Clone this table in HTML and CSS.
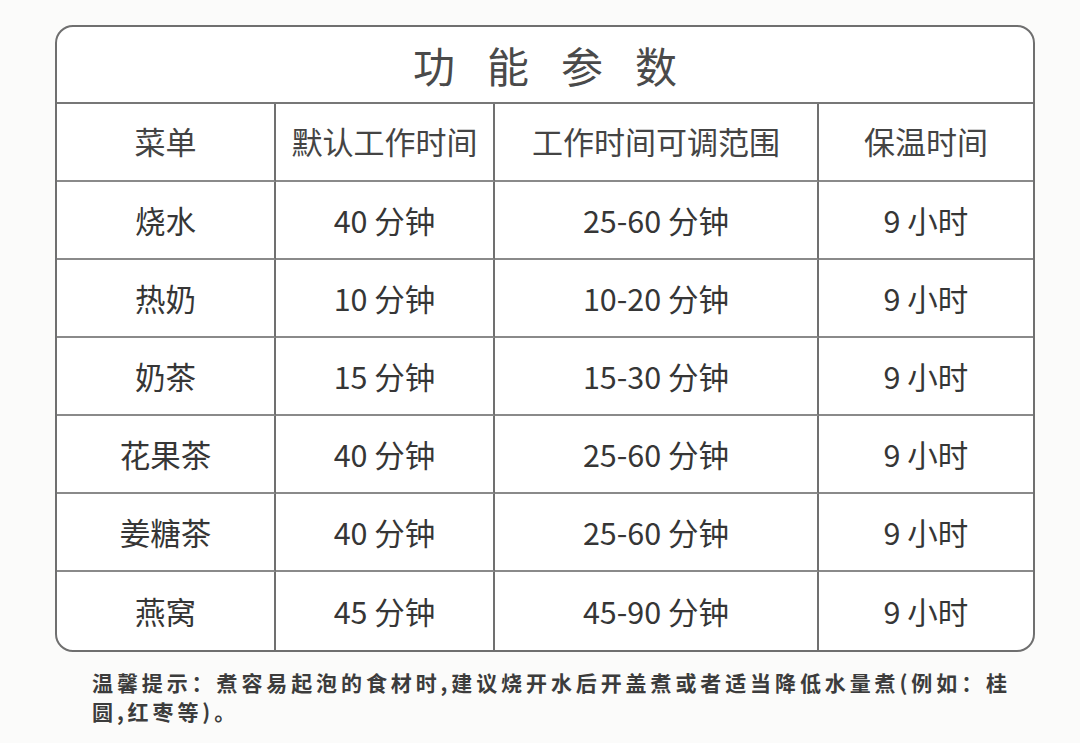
FILE: index.html
```html
<!DOCTYPE html>
<html lang="zh">
<head>
<meta charset="utf-8">
<title>功能参数</title>
<link rel="stylesheet" href="styles.css">
</head>
<body>
<div class="page">
  <div class="card">
    <div class="title">功能参数</div>
    <div class="grid">
      <div class="cell head">菜单</div>
      <div class="cell head">默认工作时间</div>
      <div class="cell head">工作时间可调范围</div>
      <div class="cell head last">保温时间</div>

      <div class="cell">烧水</div>
      <div class="cell">40 分钟</div>
      <div class="cell">25-60 分钟</div>
      <div class="cell last">9 小时</div>

      <div class="cell">热奶</div>
      <div class="cell">10 分钟</div>
      <div class="cell">10-20 分钟</div>
      <div class="cell last">9 小时</div>

      <div class="cell">奶茶</div>
      <div class="cell">15 分钟</div>
      <div class="cell">15-30 分钟</div>
      <div class="cell last">9 小时</div>

      <div class="cell">花果茶</div>
      <div class="cell">40 分钟</div>
      <div class="cell">25-60 分钟</div>
      <div class="cell last">9 小时</div>

      <div class="cell">姜糖茶</div>
      <div class="cell">40 分钟</div>
      <div class="cell">25-60 分钟</div>
      <div class="cell last">9 小时</div>

      <div class="cell bottom">燕窝</div>
      <div class="cell bottom">45 分钟</div>
      <div class="cell bottom">45-90 分钟</div>
      <div class="cell bottom last">9 小时</div>
    </div>
  </div>
  <p class="note">温馨提示：煮容易起泡的食材时,建议烧开水后开盖煮或者适当降低水量煮(例如：桂圆,红枣等)。</p>
</div>
</body>
</html>
```

FILE: styles.css
```css
html, body {
  margin: 0;
  padding: 0;
  background: #fbfbfa;
}

body {
  font-family: "Noto Sans CJK SC", "Noto Sans", sans-serif;
  color: #3a3a3a;
}

.page {
  width: 1080px;
  height: 743px;
  padding: 25px 0 0 55px;
  box-sizing: border-box;
}

.card {
  width: 980px;
  border: 2px solid #6f6f6f;
  border-radius: 18px;
  background: #ffffff;
  box-sizing: border-box;
  overflow: hidden;
}

.title {
  height: 77px;
  display: flex;
  align-items: center;
  justify-content: center;
  font-size: 42px;
  letter-spacing: 32px;
  padding-left: 32px;
  color: #4a4a4a;
  border-bottom: 2px solid #777777;
  box-sizing: border-box;
}

.grid {
  display: grid;
  grid-template-columns: 219px 219px 324px 1fr;
  grid-auto-rows: 78px;
}

.cell {
  display: flex;
  align-items: center;
  justify-content: center;
  font-size: 30.5px;
  border-right: 2px solid #707070;
  border-bottom: 2px solid #8a8a8a;
  color: #363636;
}

.cell.head {
  font-size: 31px;
  color: #444444;
  padding-bottom: 4px;
}

.cell.last {
  border-right: none;
}

.cell.bottom {
  border-bottom: none;
}

.note {
  margin: 16px 0 0 37px;
  width: 940px;
  font-size: 21px;
  font-weight: 700;
  letter-spacing: 3.9px;
  line-height: 29px;
  color: #3c3c3c;
}
```
